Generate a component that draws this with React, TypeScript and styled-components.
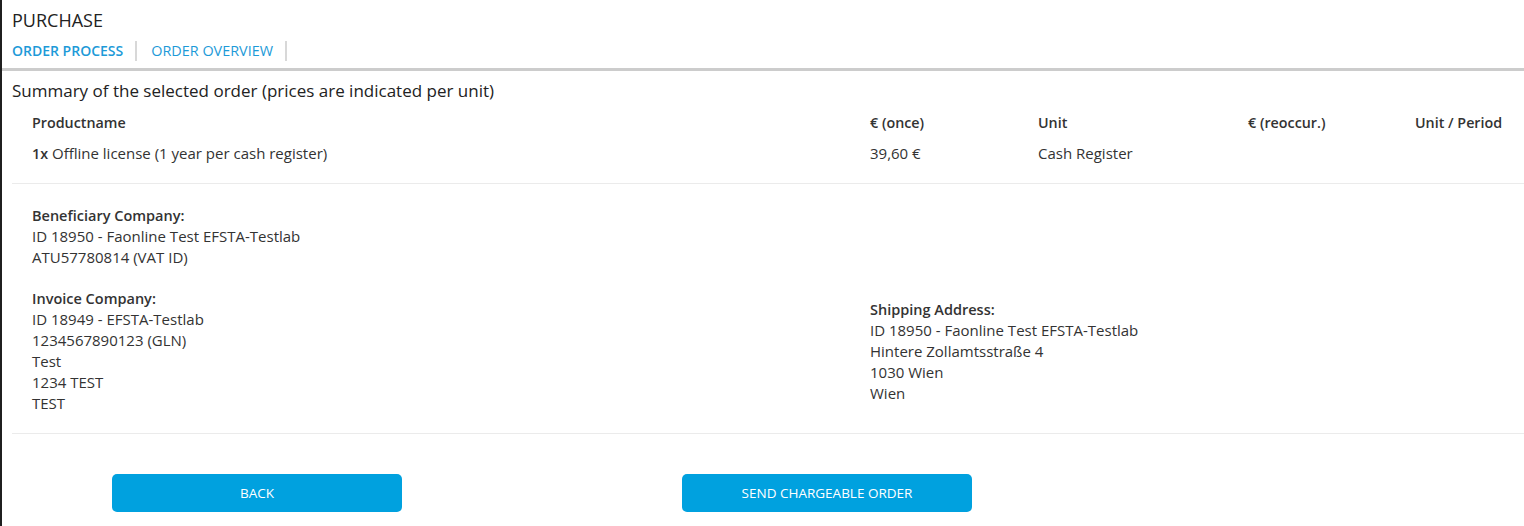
import React from "react";
import styled, { createGlobalStyle } from "styled-components";

const GlobalStyle = createGlobalStyle`
  html, body {
    margin: 0;
    padding: 0;
    background: #ffffff;
  }
  body {
    font-family: "Open Sans", "Noto Sans", "Liberation Sans", sans-serif;
    color: #333333;
  }
`;

const Page = styled.div`
  min-height: 100vh;
  border-left: 2px solid #1f1f1f;
  box-sizing: border-box;
`;

const Header = styled.div`
  padding: 8px 10px 0;
`;

const PageTitle = styled.h1`
  margin: 0;
  font-size: 18px;
  font-weight: 400;
  line-height: 24px;
  color: #222;
`;

const Tabs = styled.div`
  display: flex;
  align-items: center;
  height: 22px;
  margin-top: 8px;
  padding-bottom: 6px;
`;

const Tab = styled.a<{ active?: boolean }>`
  font-size: ${({ active }) => (active ? 14 : 14.4)}px;
  color: #1d9ad8;
  font-weight: ${({ active }) => (active ? 600 : 400)};
  text-decoration: none;
  padding-right: 12px;
  margin-right: 14px;
  border-right: 2px solid #d8d8d8;
  line-height: 20px;
`;

const Divider = styled.div`
  height: 3px;
  background: #cccccc;
`;

const Content = styled.div`
  padding: 0 0 0 10px;
`;

const SectionTitle = styled.h2`
  margin: 8px 0 0;
  font-size: 17px;
  font-weight: 400;
  line-height: 24px;
  color: #222;
`;

const Table = styled.div`
  display: grid;
  grid-template-columns: 838px 168px 210px 167px 1fr;
  padding: 9px 20px 19px;
  row-gap: 10px;
`;

const HeadCell = styled.div`
  font-size: 14.3px;
  font-weight: 600;
  line-height: 21px;
`;

const Cell = styled.div`
  font-size: 15px;
  line-height: 21px;

  b {
    font-size: 14.3px;
    font-weight: 600;
  }
`;

const Separator = styled.div`
  height: 1px;
  background: #ebebeb;
`;

const Addresses = styled.div`
  display: grid;
  grid-template-columns: 838px 1fr;
  padding: 21px 20px 19px;
  font-size: 15px;
  line-height: 21px;
`;

const Column = styled.div<{ offset?: number }>`
  display: flex;
  flex-direction: column;
  gap: 20px;
  padding-top: ${({ offset }) => offset ?? 0}px;
`;

const Block = styled.div``;

const BlockTitle = styled.div`
  font-size: 14.5px;
  font-weight: 600;
`;

const Actions = styled.div`
  display: flex;
  gap: 280px;
  padding: 40px 0 0 100px;
`;

const Button = styled.button`
  width: 290px;
  height: 38px;
  border: none;
  border-radius: 5px;
  background: #00a1df;
  color: #ffffff;
  font-family: inherit;
  font-size: 13.5px;
  text-transform: uppercase;
  cursor: pointer;
`;

export default function App() {
  return (
    <>
      <GlobalStyle />
      <Page>
        <Header>
          <PageTitle>PURCHASE</PageTitle>
          <Tabs>
            <Tab active>ORDER PROCESS</Tab>
            <Tab>ORDER OVERVIEW</Tab>
          </Tabs>
        </Header>
        <Divider />
        <Content>
          <SectionTitle>
            Summary of the selected order (prices are indicated per unit)
          </SectionTitle>
          <Table>
            <HeadCell>Productname</HeadCell>
            <HeadCell>€ (once)</HeadCell>
            <HeadCell>Unit</HeadCell>
            <HeadCell>€ (reoccur.)</HeadCell>
            <HeadCell>Unit / Period</HeadCell>
            <Cell>
              <b>1x</b> Offline license (1 year per cash register)
            </Cell>
            <Cell>39,60 €</Cell>
            <Cell>Cash Register</Cell>
            <Cell />
            <Cell />
          </Table>
          <Separator />
          <Addresses>
            <Column>
              <Block>
                <BlockTitle>Beneficiary Company:</BlockTitle>
                <div>ID 18950 - Faonline Test EFSTA-Testlab</div>
                <div>ATU57780814 (VAT ID)</div>
              </Block>
              <Block>
                <BlockTitle>Invoice Company:</BlockTitle>
                <div>ID 18949 - EFSTA-Testlab</div>
                <div>1234567890123 (GLN)</div>
                <div>Test</div>
                <div>1234 TEST</div>
                <div>TEST</div>
              </Block>
            </Column>
            <Column offset={94}>
              <Block>
                <BlockTitle>Shipping Address:</BlockTitle>
                <div>ID 18950 - Faonline Test EFSTA-Testlab</div>
                <div>Hintere Zollamtsstraße 4</div>
                <div>1030 Wien</div>
                <div>Wien</div>
              </Block>
            </Column>
          </Addresses>
          <Separator />
          <Actions>
            <Button>Back</Button>
            <Button>Send chargeable order</Button>
          </Actions>
        </Content>
      </Page>
    </>
  );
}
